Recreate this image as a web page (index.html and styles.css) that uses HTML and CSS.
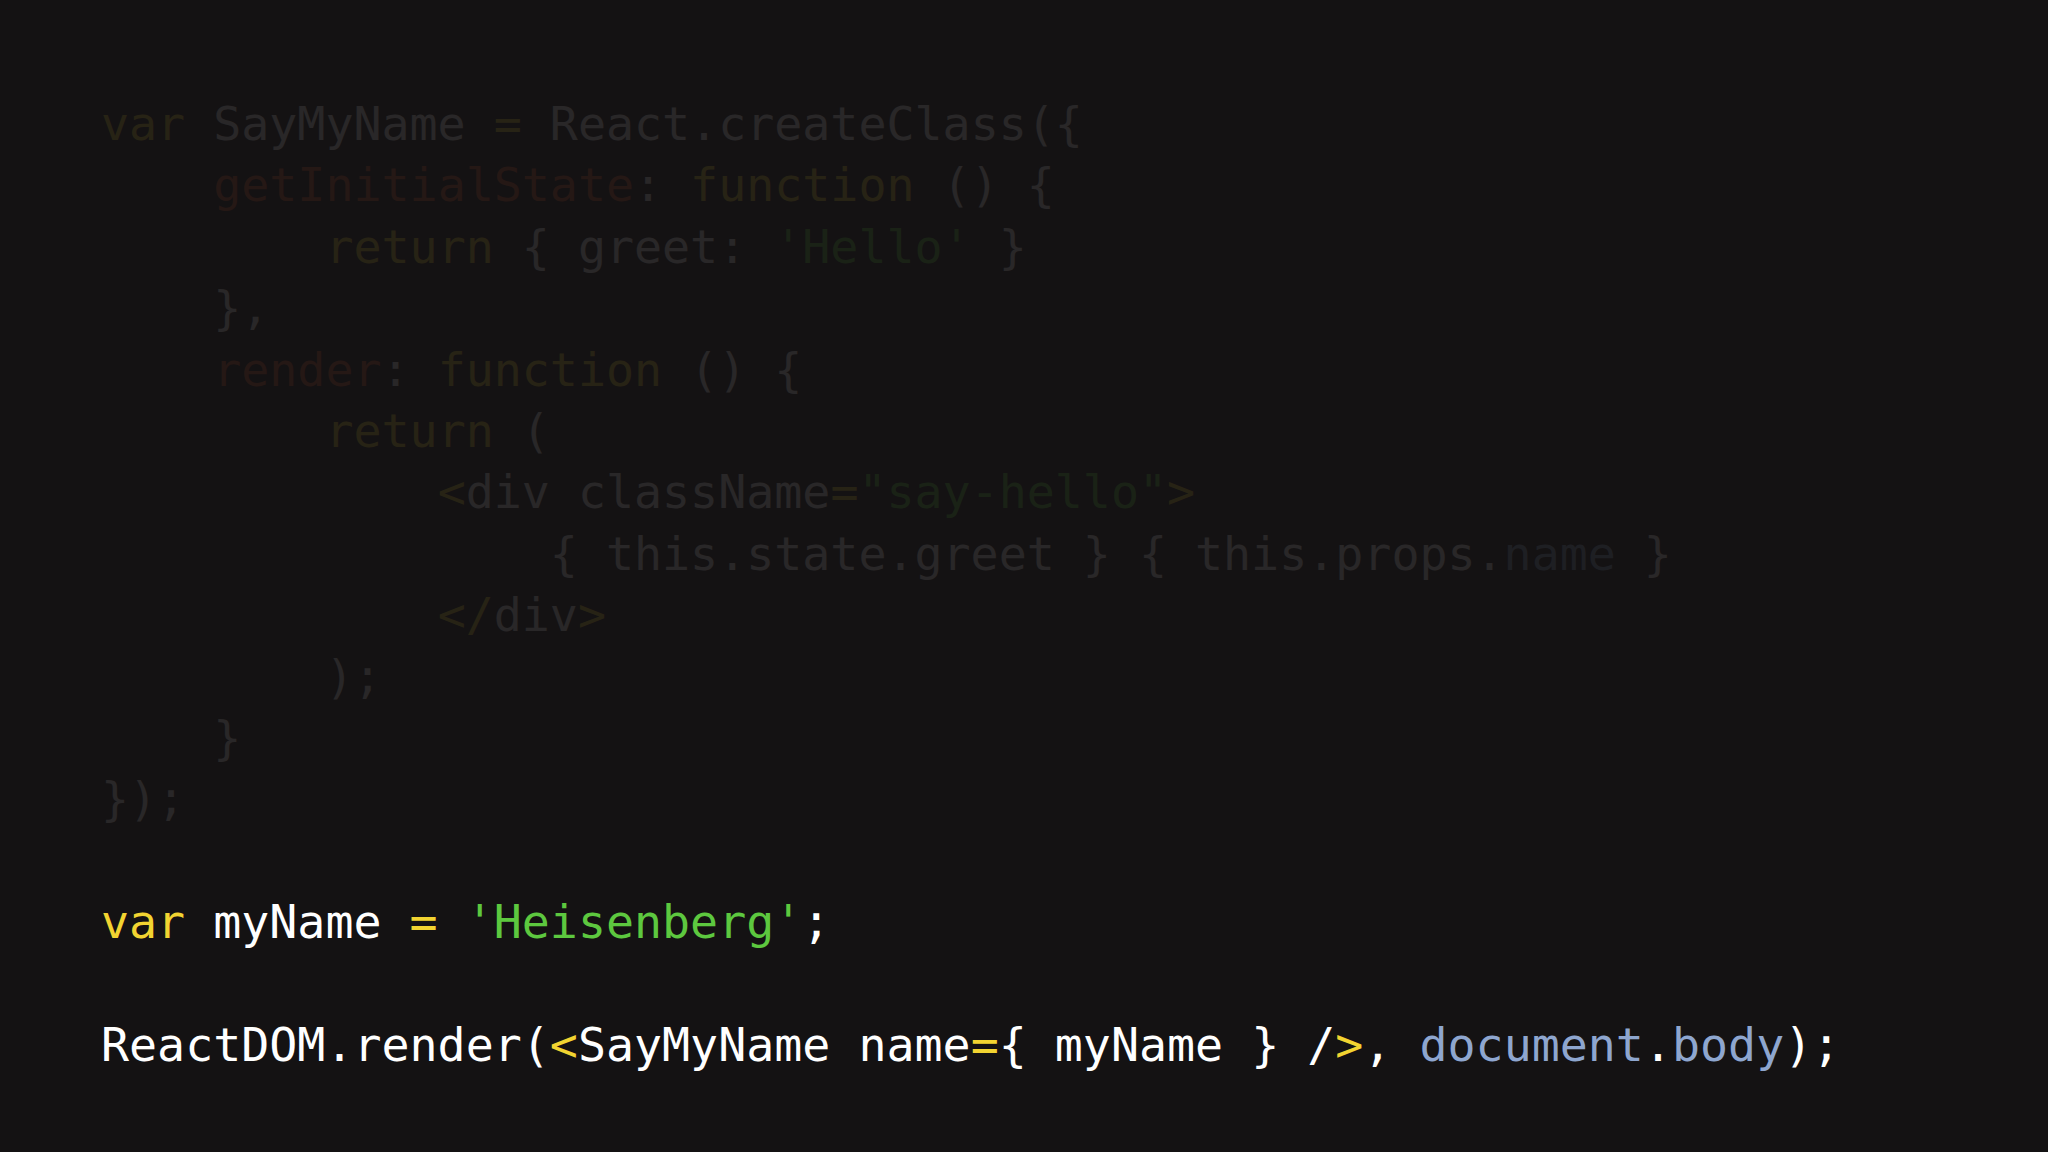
FILE: index.html
```html
<!DOCTYPE html>
<html lang="en">
<head>
    <meta charset="UTF-8">
    <meta name="viewport" content="width=device-width, initial-scale=1.0">
    <title>Say My Name</title>
    <link rel="stylesheet" href="styles.css">
</head>
<body>
    <div class="slide">
<pre class="code"><span class="dim"><span class="kw">var</span> SayMyName <span class="kw">=</span> React.createClass({
    <span class="fn">getInitialState</span>: <span class="kw">function</span> () {
        <span class="kw">return</span> { greet: <span class="str">'Hello'</span> }
    },
    <span class="fn">render</span>: <span class="kw">function</span> () {
        <span class="kw">return</span> (
            <span class="kw">&lt;</span>div className<span class="kw">=</span><span class="str">"say-hello"</span><span class="kw">&gt;</span>
                { this.state.greet } { this.props.<span class="prop">name</span> }
            <span class="kw">&lt;/</span>div<span class="kw">&gt;</span>
        );
    }
});</span>

<span class="kw">var</span> myName <span class="kw">=</span> <span class="str">'Heisenberg'</span>;

ReactDOM.render(<span class="kw">&lt;</span>SayMyName name<span class="kw">=</span>{ myName } /<span class="kw">&gt;</span>, <span class="prop">document</span>.<span class="prop">body</span>);</pre>
    </div>
</body>
</html>
```

FILE: styles.css
```css
:root {
    --background-color: #141213;
    --text-color: #ffffff;
    --keyword-color: #f2d431;
    --string-color: #5dc83f;
    --function-color: #d9552f;
    --property-color: #8ea6cf;
}
html, body {
    margin: 0;
    height: 100%;
    background-color: var(--background-color);
}
.slide {
    padding: 94px 101px 0;
}
.code {
    margin: 0;
    font-family: 'DejaVu Sans Mono', 'Liberation Mono', monospace;
    font-size: 46.6px;
    line-height: 61.4px;
    color: var(--text-color);
    white-space: pre;
}
.dim {
    opacity: 0.085;
}
.kw {
    color: var(--keyword-color);
}
.str {
    color: var(--string-color);
}
.fn {
    color: var(--function-color);
}
.prop {
    color: var(--property-color);
}
```
